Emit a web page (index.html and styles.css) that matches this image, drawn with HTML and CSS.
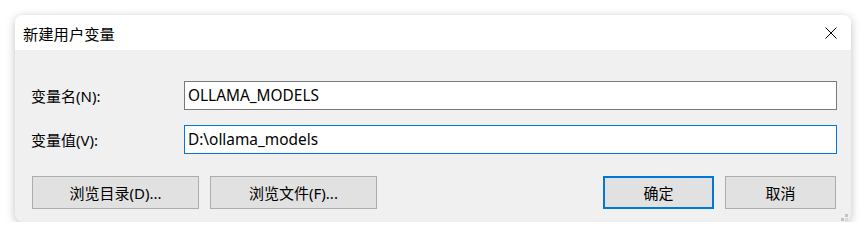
FILE: index.html
```html
<!DOCTYPE html>
<html lang="zh-CN">
<head>
    <meta charset="UTF-8">
    <title>新建用户变量</title>
    <link rel="stylesheet" href="styles.css">
</head>
<body>

    <div class="dialog">
        <div class="titlebar">
            <span class="title">新建用户变量</span>
            <span class="close">
                <svg width="12" height="12" viewBox="0 0 12 12">
                    <path d="M0.5 0.5 L11.5 11.5 M11.5 0.5 L0.5 11.5" stroke="#000" stroke-width="1" fill="none"/>
                </svg>
            </span>
        </div>

        <div class="content">
            <div class="fields">
                <label>变量名(N):</label>
                <div class="input">OLLAMA_MODELS</div>
                <label>变量值(V):</label>
                <div class="input focused">D:\ollama_models</div>
            </div>

            <div class="actions">
                <button class="wide">浏览目录(D)...</button>
                <button class="wide">浏览文件(F)...</button>
                <span class="spacer"></span>
                <button class="default">确定</button>
                <button>取消</button>
            </div>
        </div>

        <svg class="grip" width="8" height="8" viewBox="0 0 8 8">
            <rect x="4" y="0" width="3" height="3" fill="#c4c4c4"/>
            <rect x="0" y="4" width="3" height="3" fill="#c4c4c4"/>
            <rect x="4" y="4" width="3" height="3" fill="#d8d8d8"/>
        </svg>
    </div>

</body>
</html>
```

FILE: styles.css
```css
body {
    margin: 0;
    background-color: #fff;
    font-family: 'Noto Sans', 'Noto Sans CJK SC', sans-serif;
    font-size: 15px;
    color: #000;
}
.dialog {
    position: relative;
    margin: 15px 0 0 15px;
    width: 836px;
    height: 207px;
    border-radius: 8px;
    overflow: hidden;
    background-color: #f0f0f0;
    box-shadow: 0 2px 10px rgba(0,0,0,0.25);
}
.titlebar {
    height: 35px;
    background-color: #fff;
    display: flex;
    align-items: center;
    justify-content: space-between;
    padding: 0 14px 0 8px;
}
.title {
    font-size: 15.3px;
}
.close {
    display: flex;
    margin-top: 1px;
}
.content {
    padding: 31px 14px 13px 16px;
}
.fields {
    display: grid;
    grid-template-columns: 153px 1fr;
    row-gap: 15px;
    align-items: center;
}
.input {
    height: 29px;
    box-sizing: border-box;
    border: 1px solid #7a7a7a;
    background-color: #fff;
    padding-left: 3px;
    line-height: 27px;
    font-size: 15.4px;
}
.input.focused {
    border-color: #0078d7;
}
.actions {
    display: flex;
    gap: 11px;
    margin-top: 22px;
    padding: 0 1px;
}
.spacer {
    flex: 1;
}
button {
    width: 111px;
    height: 33px;
    box-sizing: border-box;
    border: 1px solid #adadad;
    background-color: #e1e1e1;
    font-family: inherit;
    font-size: 15px;
    color: #000;
    padding: 0;
}
button.wide {
    width: 167px;
}
button.default {
    border: 2px solid #0078d7;
}
.grip {
    position: absolute;
    right: 2px;
    bottom: 0px;
}
```
